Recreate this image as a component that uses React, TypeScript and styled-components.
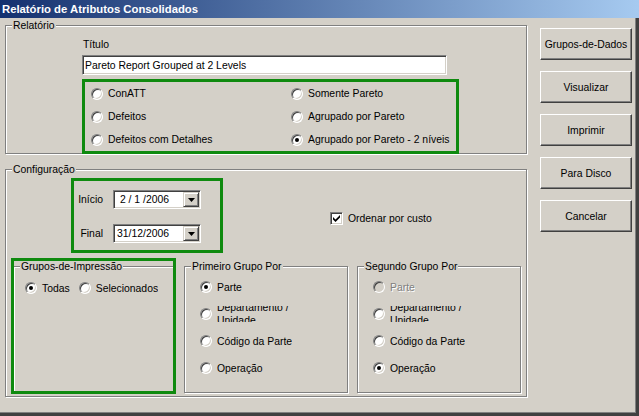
import React from "react";
import styled, { createGlobalStyle } from "styled-components";

const GlobalStyle = createGlobalStyle`
  html, body {
    margin: 0;
    padding: 0;
    background: #d4d0c8;
  }

  body {
    color: #000;
    font-family: "Liberation Sans", Arial, sans-serif;
    font-size: 10.4px;
    line-height: 13px;
  }

  * {
    box-sizing: border-box;
  }
`;

type RadioProps = {
  label: string;
  checked?: boolean;
  disabled?: boolean;
  wrap?: boolean;
};

const Radio: React.FC<RadioProps> = ({ label, checked, disabled, wrap }) => (
  <Option $disabled={disabled}>
    <RadioDot $checked={checked} $disabled={disabled} />
    <OptionText $wrap={wrap}>{label}</OptionText>
  </Option>
);

const DatePicker: React.FC<{ value: string }> = ({ value }) => (
  <DateField>
    <DateText>{value}</DateText>
    <DropButton>
      <svg width="7" height="4" viewBox="0 0 7 4">
        <polygon points="0,0 7,0 3.5,4" fill="#000" />
      </svg>
    </DropButton>
  </DateField>
);

const reportTypes: RadioProps[] = [
  { label: "ConATT" },
  { label: "Somente Pareto" },
  { label: "Defeitos" },
  { label: "Agrupado por Pareto" },
  { label: "Defeitos com Detalhes" },
  { label: "Agrupado por Pareto - 2 níveis", checked: true },
];

const buttons = ["Grupos-de-Dados", "Visualizar", "Imprimir", "Para Disco", "Cancelar"];

const App: React.FC = () => {
  return (
    <>
      <GlobalStyle />
      <Window>
        <TitleBar>Relatório de Atributos Consolidados</TitleBar>
        <Body>
          <MainColumn>
            <GroupBox $width={522} $height={135}>
              <Legend>Relatório</Legend>
              <ReportBody>
                <FieldLabel>Título</FieldLabel>
                <TextField readOnly defaultValue="Pareto Report Grouped at 2 Levels" />
                <ReportTypes>
                  {reportTypes.map((item) => (
                    <Radio key={item.label} {...item} />
                  ))}
                </ReportTypes>
              </ReportBody>
            </GroupBox>

            <GroupBox $width={522} $height={234}>
              <Legend>Configuração</Legend>
              <ConfigBody>
                <ConfigTop>
                  <DateBox>
                    <DateLabel>Início</DateLabel>
                    <DatePicker value={"\u00a02 / 1 /2006"} />
                    <DateLabel>Final</DateLabel>
                    <DatePicker value="31/12/2006" />
                  </DateBox>
                  <CheckOption>
                    <CheckBox>
                      <svg width="7" height="7" viewBox="0 0 7 7">
                        <polygon points="0,2 2.5,4.5 7,0 7,2.5 2.5,7 0,4.5" fill="#000" />
                      </svg>
                    </CheckBox>
                    Ordenar por custo
                  </CheckOption>
                </ConfigTop>

                <GroupRow>
                  <Outlined>
                    <GroupBox $width={162} $height={133}>
                      <Legend>Grupos-de-Impressão</Legend>
                      <PrintGroups>
                        <Radio label="Todas" checked />
                        <Radio label="Selecionados" />
                      </PrintGroups>
                    </GroupBox>
                  </Outlined>

                  <GroupBox $width={164} $height={133}>
                    <Legend>Primeiro Grupo Por</Legend>
                    <GroupOptions>
                      <Radio label="Parte" checked />
                      <Radio label="Departamento / Unidade" wrap />
                      <Radio label="Código da Parte" />
                      <Radio label="Operação" />
                    </GroupOptions>
                  </GroupBox>

                  <GroupBox $width={164} $height={133}>
                    <Legend>Segundo Grupo Por</Legend>
                    <GroupOptions>
                      <Radio label="Parte" disabled />
                      <Radio label="Departamento / Unidade" wrap />
                      <Radio label="Código da Parte" />
                      <Radio label="Operação" checked />
                    </GroupOptions>
                  </GroupBox>
                </GroupRow>
              </ConfigBody>
            </GroupBox>
          </MainColumn>

          <ButtonColumn>
            {buttons.map((label) => (
              <PushButton key={label}>{label}</PushButton>
            ))}
          </ButtonColumn>
        </Body>
      </Window>
    </>
  );
};

const Window = styled.div`
  background: #d4d0c8;
  display: flex;
  flex-direction: column;
  height: 416px;
  overflow: hidden;
  width: 639px;
`;

const TitleBar = styled.div`
  align-items: center;
  background: linear-gradient(to right, #14316f, #a6caf0);
  color: #fff;
  display: flex;
  flex: none;
  font-size: 11.3px;
  font-weight: bold;
  height: 18px;
  padding: 1px 0 0 2px;
  white-space: nowrap;
`;

const Body = styled.div`
  border-bottom: 3px solid #404040;
  border-right: 3px solid #404040;
  box-shadow: inset -1px -1px 0 #808080;
  display: flex;
  flex: 1;
  gap: 12px;
  padding: 1px 0 0 5px;
`;

const MainColumn = styled.div`
  display: flex;
  flex-direction: column;
  gap: 9px;
  width: 523px;
`;

const GroupBox = styled.fieldset<{ $width: number; $height: number }>`
  border: 1px solid #808080;
  box-shadow: inset 1px 1px 0 #fff, 1px 1px 0 #fff;
  flex: none;
  height: ${(p) => p.$height}px;
  margin: 0;
  min-width: 0;
  padding: 0;
  width: ${(p) => p.$width}px;
`;

const Legend = styled.legend`
  background: #d4d0c8;
  line-height: 13px;
  margin-left: 6px;
  padding: 0 1px;
  white-space: nowrap;
`;

const ReportBody = styled.div`
  display: flex;
  flex-direction: column;
  padding: 6px 0 0 76px;
`;

const FieldLabel = styled.div`
  padding-left: 1px;
`;

const TextField = styled.input`
  background: #fff;
  border: 1px solid;
  border-color: #808080 #fff #fff #808080;
  box-shadow: inset 1px 1px 0 #404040, inset -1px -1px 0 #d4d0c8;
  color: #000;
  font: inherit;
  height: 20px;
  margin-top: 4px;
  outline: none;
  padding: 0 2px;
  width: 365px;
`;

const ReportTypes = styled.div`
  align-items: center;
  border: 3px solid #0f8a0f;
  display: grid;
  grid-auto-rows: 23px;
  grid-template-columns: 200px 1fr;
  height: 75px;
  margin-top: 4px;
  padding-left: 6px;
  width: 377px;
`;

const Option = styled.label<{ $disabled?: boolean }>`
  align-items: center;
  color: ${(p) => (p.$disabled ? "#808080" : "#000")};
  display: flex;
  gap: 5px;
  height: 16px;
  overflow: hidden;
  text-shadow: ${(p) => (p.$disabled ? "1px 1px 0 #fff" : "none")};
  white-space: nowrap;
`;

const OptionText = styled.span<{ $wrap?: boolean }>`
  flex: none;
  white-space: ${(p) => (p.$wrap ? "normal" : "nowrap")};
  width: ${(p) => (p.$wrap ? "90px" : "auto")};
`;

const RadioDot = styled.span<{ $checked?: boolean; $disabled?: boolean }>`
  background: ${(p) => (p.$disabled ? "#d4d0c8" : "#fff")};
  border: 1px solid;
  border-color: #808080 #fff #fff #808080;
  border-radius: 50%;
  box-shadow: inset 1px 1px 0 #404040, inset -1px -1px 0 #d4d0c8;
  flex: none;
  height: 12px;
  position: relative;
  width: 12px;

  &::after {
    background: #000;
    border-radius: 50%;
    content: "";
    display: ${(p) => (p.$checked ? "block" : "none")};
    height: 4px;
    left: 3px;
    position: absolute;
    top: 3px;
    width: 4px;
  }
`;

const ConfigBody = styled.div`
  display: flex;
  flex-direction: column;
  gap: 7px;
  padding: 2px 0 0 7px;
`;

const ConfigTop = styled.div`
  align-items: flex-start;
  display: flex;
`;

const DateBox = styled.div`
  align-items: center;
  border: 3px solid #0f8a0f;
  column-gap: 10px;
  display: grid;
  grid-template-columns: 27px 88px;
  height: 75px;
  margin-left: 58px;
  padding: 9px 19px 7px 2px;
  row-gap: 15px;
  width: 152px;
`;

const DateLabel = styled.span`
  text-align: right;
  white-space: nowrap;
`;

const DateField = styled.div`
  align-items: stretch;
  background: #fff;
  border: 1px solid;
  border-color: #808080 #fff #fff #808080;
  box-shadow: inset 1px 1px 0 #404040, inset -1px -1px 0 #d4d0c8;
  display: flex;
  height: 19px;
  padding: 1px;
`;

const DateText = styled.span`
  align-self: center;
  flex: 1;
  padding-left: 2px;
  white-space: nowrap;
`;

const DropButton = styled.span`
  align-items: center;
  background: #d4d0c8;
  border: 1px solid;
  border-color: #d4d0c8 #404040 #404040 #d4d0c8;
  box-shadow: inset 1px 1px 0 #fff, inset -1px -1px 0 #808080;
  display: flex;
  justify-content: center;
  width: 16px;
`;

const CheckOption = styled.label`
  align-items: center;
  display: flex;
  gap: 5px;
  margin: 34px 0 0 107px;
  white-space: nowrap;
`;

const CheckBox = styled.span`
  align-items: center;
  background: #fff;
  border: 1px solid;
  border-color: #808080 #fff #fff #808080;
  box-shadow: inset 1px 1px 0 #404040, inset -1px -1px 0 #d4d0c8;
  display: flex;
  height: 13px;
  justify-content: center;
  width: 13px;
`;

const GroupRow = styled.div`
  align-items: flex-start;
  display: flex;
  gap: 9px;
`;

const Outlined = styled.div`
  position: relative;

  &::after {
    border: 3px solid #0f8a0f;
    content: "";
    inset: -2px -1px -1px -2px;
    pointer-events: none;
    position: absolute;
  }
`;

const PrintGroups = styled.div`
  display: flex;
  gap: 9px;
  padding: 7px 0 0 11px;
`;

const GroupOptions = styled.div`
  align-items: flex-start;
  display: flex;
  flex-direction: column;
  gap: 11px;
  padding: 6px 0 0 15px;
`;

const ButtonColumn = styled.div`
  display: flex;
  flex-direction: column;
  gap: 11px;
  padding-top: 9px;
  width: 92px;
`;

const PushButton = styled.button`
  background: #d4d0c8;
  border: 1px solid;
  border-color: #fff #404040 #404040 #fff;
  box-shadow: inset -1px -1px 0 #808080;
  color: #000;
  font: inherit;
  height: 32px;
  padding: 0;
  width: 92px;
`;

export default App;
